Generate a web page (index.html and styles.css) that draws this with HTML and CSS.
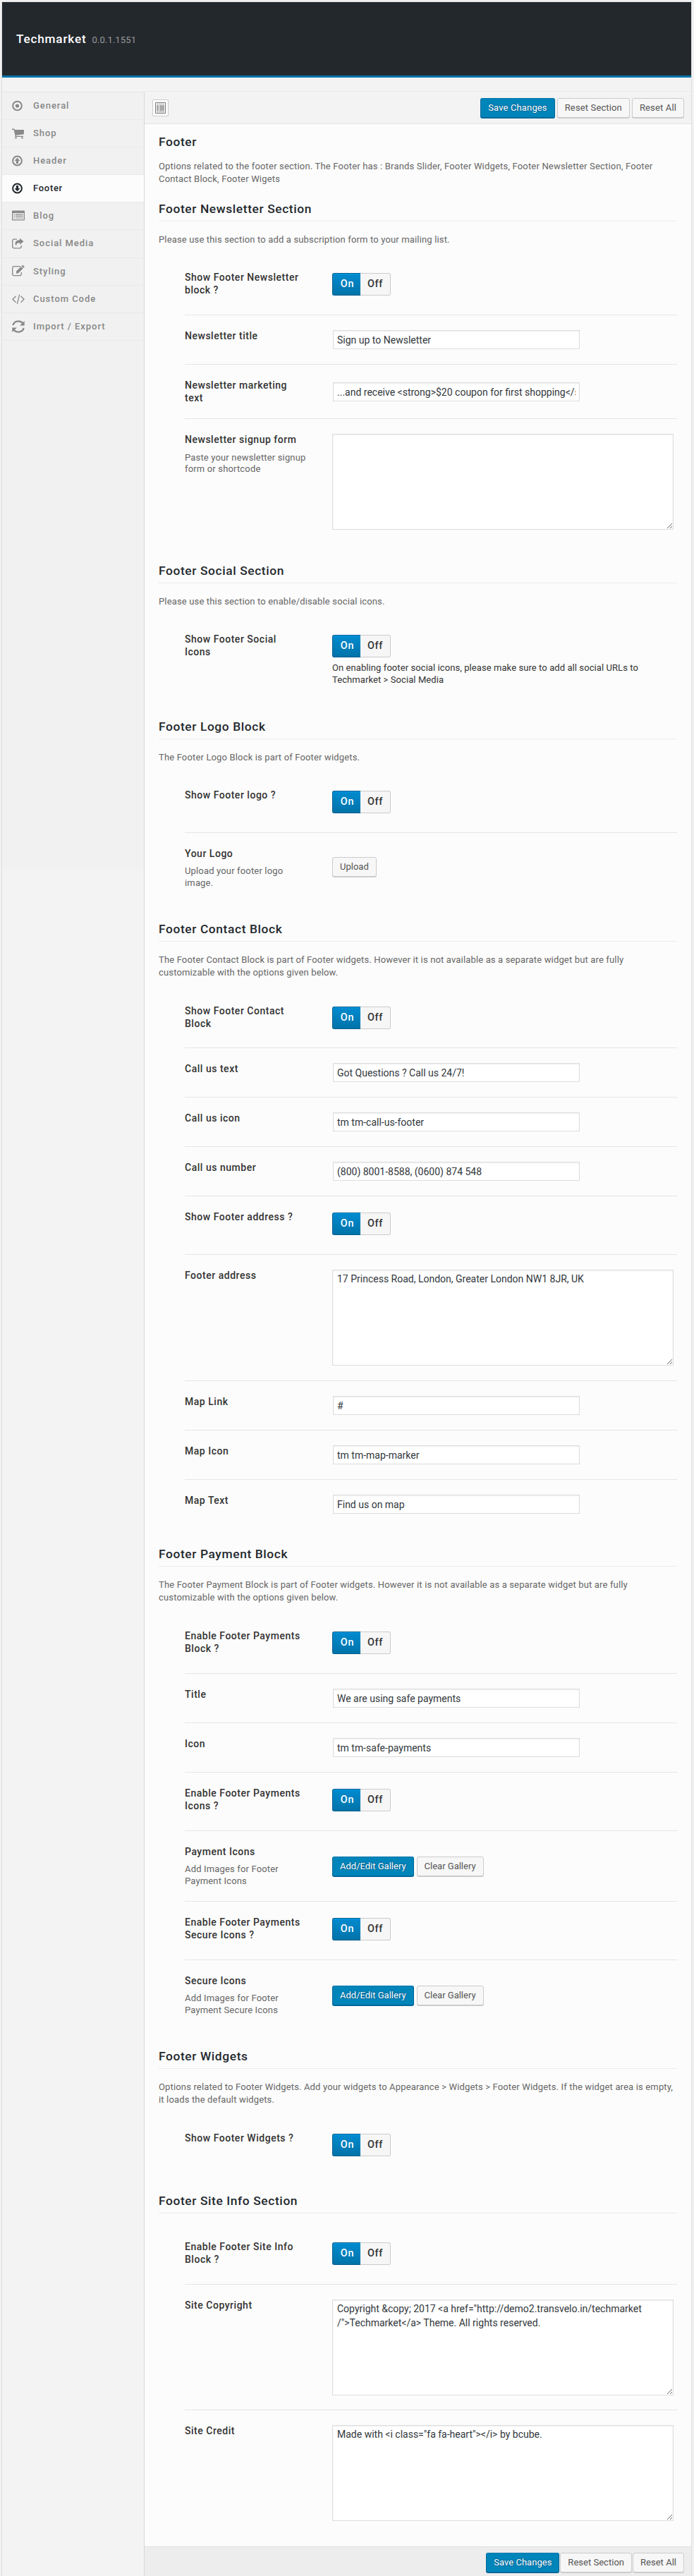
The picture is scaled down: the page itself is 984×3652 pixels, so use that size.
FILE: index.html
```html
<!DOCTYPE html>
<html lang="en">
<head>
<meta charset="utf-8">
<title>Techmarket options</title>
<link rel="stylesheet" href="styles.css">
</head>
<body>
<div class="panel">
  <header class="masthead"><h1>Techmarket</h1><span class="version">0.0.1.1551</span></header>
  <div class="strip"></div>
  <div class="layout">
    <nav class="sidebar">
      <a class="nav-item"><svg class="ico" viewBox="0 0 18 18"><circle cx="7.5" cy="9" r="6.3" fill="none" stroke="currentColor" stroke-width="2"/><circle cx="7.5" cy="9" r="2.6"/></svg>General</a>
      <a class="nav-item"><svg class="ico" viewBox="0 0 18 18"><path d="M0 2.5h3.4l.5 1.6h13v6.2L5.6 11.7l.4 1h10v1.3H4.4l.1-1.8L2.6 3.9H0zM4.3 14.4h2.4v2.2H4.3zM13.2 14.4h2.4v2.2h-2.4z"/></svg>Shop</a>
      <a class="nav-item"><svg class="ico" viewBox="0 0 18 18"><circle cx="7.5" cy="9" r="6.4" fill="none" stroke="currentColor" stroke-width="2"/><path d="M7.5 4.8l4 4.2H9v4H6V9H3.500z"/></svg>Header</a>
      <a class="nav-item active"><svg class="ico" viewBox="0 0 18 18"><circle cx="7.500" cy="9" r="6.4" fill="none" stroke="currentColor" stroke-width="2"/><path d="M7.5 13.200l-4-4.200H6V5h3v4h2.500z"/></svg>Footer</a>
      <a class="nav-item"><svg class="ico" viewBox="0 0 18 18"><path fill-rule="evenodd" d="M1 1.500h16q1 0 1 1v12q0 1-1 1H1q-1 0-1-1v-12q0-1 1-1zM1.300 5v9.200h15.400V5zM2.600 6.200h1.500v1.200H2.600zM5 6.200h10.500v1.200H5zM2.600 8.800h1.500V10H2.600zM5 8.800h10.500V10H5zM2.600 11.400h1.500v1.200H2.600zM5 11.400h10.500v1.200H5z"/></svg>Blog</a>
      <a class="nav-item"><svg class="ico" viewBox="0 0 18 18"><path d="M7 2.200H3.200Q.7 2.200.7 4.700v7.600q0 2.500 2.500 2.500h7.600q2.500 0 2.500-2.500V11" fill="none" stroke="currentColor" stroke-width="1.300"/><path d="M11 .8l5.500 4.400L11 9.700V7.200C7.800 7 6 8 6.200 11.800 2.500 7.500 5.500 3.300 11 3.300z"/></svg>Social Media</a>
      <a class="nav-item"><svg class="ico" viewBox="0 0 18 18"><path d="M12 1.700H3.200Q.7 1.700.7 4.200v8q0 2.500 2.500 2.500h7.600q2.500 0 2.500-2.500V10" fill="none" stroke="currentColor" stroke-width="1.300"/><path d="M6 8.800l6.800-6.900 2.800 2.700-6.900 6.900H6zM13.500 1.200l1.200-1.100q.5-.4 1 0l1.700 1.700q.4.5 0 1l-1.100 1.200z"/></svg>Styling</a>
      <a class="nav-item"><svg class="ico" viewBox="0 0 18 18"><path d="M5.500 4.800L1 9.300l4.500 4.500M12.500 4.800L17 9.300l-4.500 4.500M10.600 2.700L7.400 15.800" fill="none" stroke="currentColor" stroke-width="1.300"/></svg>Custom Code</a>
      <a class="nav-item"><svg class="ico" viewBox="0 0 18 18"><path d="M1.400 7C2.800 1 11-.7 15.300 4.200M16.600 11C15.200 17 7 18.700 2.700 13.800" fill="none" stroke="currentColor" stroke-width="2.300"/><path d="M17.700.9v6.600h-6.600zM.3 17.100v-6.600h6.600z"/></svg>Import / Export</a>
    </nav>
    <main class="main">
      <div class="toolbar">
        <span class="expand"><svg viewBox="0 0 15 16"><path fill="none" stroke="#777" d="M.5.5h14v15H.5z"/><path fill="#aaa" d="M2 2h11v1H2zM2 4h3v8.500H2zM6 4h7v8.500H6zM2 13.300h11v1H2z"/></svg></span>
        <div class="actions"><a class="btn primary">Save Changes</a><a class="btn">Reset Section</a><a class="btn">Reset All</a></div>
      </div>
      <div class="content">
        <div class="intro">
          <h2>Footer</h2>
          <p>Options related to the footer section. The Footer has : Brands Slider, Footer Widgets, Footer Newsletter Section, Footer Contact Block, Footer Wigets</p>
        </div>

        <section>
          <h3>Footer Newsletter Section</h3>
          <p class="desc">Please use this section to add a subscription form to your mailing list.</p>
          <div class="row"><div class="label">Show Footer Newsletter block ?</div><div class="toggle"><b class="on">On</b><b class="off">Off</b></div></div>
          <div class="row text"><div class="label">Newsletter title</div><input class="input" value="Sign up to Newsletter"></div>
          <div class="row text-tall"><div class="label">Newsletter marketing text</div><input class="input" value="...and receive &lt;strong&gt;$20 coupon for first shopping&lt;/strong&gt;"></div>
          <div class="row area last"><div class="label">Newsletter signup form<small class="tight">Paste your newsletter signup form or shortcode</small></div><textarea class="textarea"></textarea></div>
        </section>

        <section>
          <h3>Footer Social Section</h3>
          <p class="desc">Please use this section to enable/disable social icons.</p>
          <div class="row last noted"><div class="label">Show Footer Social<br>Icons</div><div><div class="toggle"><b class="on">On</b><b class="off">Off</b></div><p class="note">On enabling footer social icons, please make sure to add all social URLs to Techmarket &gt; Social Media</p></div></div>
        </section>

        <section>
          <h3>Footer Logo Block</h3>
          <p class="desc">The Footer Logo Block is part of Footer widgets.</p>
          <div class="row"><div class="label">Show Footer logo ?</div><div class="toggle"><b class="on">On</b><b class="off">Off</b></div></div>
          <div class="row upload last"><div class="label">Your Logo<small>Upload your footer logo image.</small></div><div class="buttons"><a class="btn">Upload</a></div></div>
        </section>

        <section>
          <h3>Footer Contact Block</h3>
          <p class="desc two">The Footer Contact Block is part of Footer widgets. However it is not available as a separate widget but are fully customizable with the options given below.</p>
          <div class="row short"><div class="label">Show Footer Contact Block</div><div class="toggle"><b class="on">On</b><b class="off">Off</b></div></div>
          <div class="row text"><div class="label">Call us text</div><input class="input" value="Got Questions ? Call us 24/7!"></div>
          <div class="row text"><div class="label">Call us icon</div><input class="input" value="tm tm-call-us-footer"></div>
          <div class="row text"><div class="label">Call us number</div><input class="input" value="(800) 8001-8588, (0600) 874 548"></div>
          <div class="row"><div class="label">Show Footer address ?</div><div class="toggle"><b class="on">On</b><b class="off">Off</b></div></div>
          <div class="row area"><div class="label">Footer address</div><textarea class="textarea">17 Princess Road, London, Greater London NW1 8JR, UK</textarea></div>
          <div class="row text"><div class="label">Map Link</div><input class="input" value="#"></div>
          <div class="row text"><div class="label">Map Icon</div><input class="input" value="tm tm-map-marker"></div>
          <div class="row text last"><div class="label">Map Text</div><input class="input" value="Find us on map"></div>
        </section>

        <section>
          <h3>Footer Payment Block</h3>
          <p class="desc two">The Footer Payment Block is part of Footer widgets. However it is not available as a separate widget but are fully customizable with the options given below.</p>
          <div class="row"><div class="label">Enable Footer Payments Block ?</div><div class="toggle"><b class="on">On</b><b class="off">Off</b></div></div>
          <div class="row text"><div class="label">Title</div><input class="input" value="We are using safe payments"></div>
          <div class="row text"><div class="label">Icon</div><input class="input" value="tm tm-safe-payments"></div>
          <div class="row"><div class="label">Enable Footer Payments Icons ?</div><div class="toggle"><b class="on">On</b><b class="off">Off</b></div></div>
          <div class="row gallery"><div class="label">Payment Icons<small>Add Images for Footer Payment Icons</small></div><div class="buttons"><a class="btn primary">Add/Edit Gallery</a><a class="btn">Clear Gallery</a></div></div>
          <div class="row"><div class="label">Enable Footer Payments Secure Icons ?</div><div class="toggle"><b class="on">On</b><b class="off">Off</b></div></div>
          <div class="row gallery last"><div class="label">Secure Icons<small>Add Images for Footer Payment Secure Icons</small></div><div class="buttons"><a class="btn primary">Add/Edit Gallery</a><a class="btn">Clear Gallery</a></div></div>
        </section>

        <section>
          <h3>Footer Widgets</h3>
          <p class="desc two">Options related to Footer Widgets. Add your widgets to Appearance &gt; Widgets &gt; Footer Widgets. If the widget area is empty, it loads the default widgets.</p>
          <div class="row last"><div class="label">Show Footer Widgets ?</div><div class="toggle"><b class="on">On</b><b class="off">Off</b></div></div>
        </section>

        <section>
          <h3 class="bare">Footer Site Info Section</h3>
          <div class="row"><div class="label">Enable Footer Site Info Block ?</div><div class="toggle"><b class="on">On</b><b class="off">Off</b></div></div>
          <div class="row area copyright"><div class="label">Site Copyright</div><textarea class="textarea">Copyright &amp;copy; 2017 &lt;a href="http://demo2.transvelo.in/techmarket
/"&gt;Techmarket&lt;/a&gt; Theme. All rights reserved.</textarea></div>
          <div class="row area last"><div class="label">Site Credit</div><textarea class="textarea">Made with &lt;i class="fa fa-heart"&gt;&lt;/i&gt; by bcube.</textarea></div>
        </section>
      </div>
      <div class="bottombar">
        <div class="actions"><a class="btn primary">Save Changes</a><a class="btn">Reset Section</a><a class="btn">Reset All</a></div>
      </div>
    </main>
  </div>
</div>
</body>
</html>
```
FILE: styles.css
```css
* { box-sizing: border-box; }
body {
  margin: 0;
  padding: 2px 3px 0 2px;
  background: #f1f1f1;
  color: #333;
  font: 13px/18.2px Roboto, sans-serif;
}
.panel { height: 3650px; overflow: hidden; border: 1px solid #dedede; border-bottom: 0; background: #f3f3f3; }
.masthead {
  height: 107px;
  padding: 0 20px;
  display: flex;
  align-items: baseline;
  gap: 8px;
  background: #23282d;
  border-bottom: 3px solid #0073aa;
}
.masthead h1 { margin: 0; color: #fff; font-size: 17.2px; line-height: 104px; font-weight: 500; letter-spacing: .8px; }
.version { color: #999; letter-spacing: .12px; }
.strip { height: 21px; border-bottom: 1px solid #e3e3e3; }
.layout { display: flex; height: 3522px; }
.sidebar { width: 202px; border-right: 1px solid #d8d8d8; background: linear-gradient(#f1f1f1 1100px, #f3f3f3 1100px); }
.nav-item {
  height: 39.1px;
  display: flex;
  align-items: center;
  gap: 12px;
  padding-left: 14px;
  border-bottom: 1px solid #eaeaea;
  color: #888;
  font-weight: 500;
  letter-spacing: .95px;
}
.nav-item.active { background: #fcfcfc; color: #23282d; letter-spacing: .7px; }
.ico { width: 18px; height: 18px; fill: currentColor; }
.main { flex: 1; background: #fcfcfc; }
.toolbar {
  height: 45px;
  padding: 0 10px 2px 11px;
  display: flex;
  align-items: center;
  justify-content: space-between;
  background: #f3f3f3;
  border-top: 1px solid #fff;
  border-bottom: 1px solid #e3e3e3;
}
.expand { width: 23px; height: 24px; display: grid; place-items: center; border: 1px solid #ccc; border-radius: 2px; background: #fff; }
.expand svg { width: 15px; height: 16px; }
.actions { display: flex; gap: 3px; }
.btn {
  height: 28px;
  padding: 0 10px;
  border: 1px solid #ccc;
  border-radius: 3px;
  background: #f7f7f7;
  box-shadow: 0 1px 0 #ccc;
  color: #555;
  line-height: 26px;
  white-space: nowrap;
  letter-spacing: .14px;
}
.btn.primary {
  border-color: #0073aa #006799 #006799;
  background: #0085ba;
  box-shadow: 0 1px 0 #006799;
  color: #fff;
  text-shadow: 0 -1px 1px #006799, 1px 0 1px #006799, 0 1px 1px #006799;
}
.content { height: 3434px; padding: 0 20px; }
.intro { height: 98px; padding-top: 15px; }
.intro h2, section h3 { margin: 0; color: #23282d; font-size: 17.4px; font-weight: 500; letter-spacing: .6px; line-height: 20px; }
.intro p { margin: 16px 0 0; color: #666; letter-spacing: .18px; }
section h3 { height: 40px; padding-top: 12px; border-bottom: 1px solid #ececec; }
section h3.bare { margin-bottom: 18px; }
.desc { height: 50px; margin: 0; padding: 17px 2px 0 0; color: #666; letter-spacing: .155px; }
.desc.two { height: 69px; }
.row {
  height: 83px;
  margin-left: 37px;
  padding-top: 21px;
  display: grid;
  grid-template-columns: 173px 1fr;
  column-gap: 36px;
  align-items: start;
  border-bottom: 1px solid #e5e5e5;
}
.row.last { border-bottom: 0; height: 96px; }
.row.short { height: 82px; }
.row.text { height: 70px; }
.row.text-tall { height: 77px; }
.row.text-tall .input { margin-top: 4px; }
.row.text.last { height: 83px; }
.row.area { height: 179px; }
.row.area.copyright { height: 178px; }
.row.area.last { height: 193px; }
.row.noted.last { height: 131px; }
.row.upload.last, .row.gallery.last { height: 114px; }
.row.gallery { height: 100px; }
.label { margin-top: -1px; color: #333; font-size: 14px; font-weight: 500; line-height: 18.2px; letter-spacing: .52px; }
.label small { display: block; margin-top: 7px; color: #666; font-size: 13px; font-weight: 400; line-height: 17px; letter-spacing: .16px; }
.label small.tight { margin-top: 9px; line-height: 16px; }
.toggle { display: flex; width: 83px; height: 32px; margin-top: 2px; font-size: 14.4px; line-height: 29px; letter-spacing: .7px; text-align: center; }
.toggle b { font-weight: 500; border: 1px solid #ccc; }
.toggle .on { width: 40px; padding-left: 2px; color: #fff; background: linear-gradient(#008bd0, #0073a9); border-color: #005d8c; border-right: 0; border-radius: 3px 0 0 3px; box-shadow: inset 0 1px 0 #009ae6; }
.toggle .off { width: 43px; border-left: 0; border-radius: 0 3px 3px 0; background: #f6f6f6; }
.note { margin: 6px 0 0; line-height: 17px; color: #333; letter-spacing: .08px; }
.input, .textarea { display: block; margin: 0; border: 1px solid #ddd; border-radius: 0; outline: 0; background: #fff; color: #32373c; box-shadow: inset 0 1px 2px rgba(0,0,0,.07); font: 14px/20px Roboto, sans-serif; }
.input { width: 350px; height: 27px; margin-left: 1px; padding: 3px 5px; }
.textarea { width: 484px; height: 136px; padding: 2px 6px; resize: vertical; }
.buttons { display: flex; gap: 4px; margin-top: 15px; }
.buttons .btn { letter-spacing: 0; }
.upload .buttons { margin-top: 13px; }
.bottombar { height: 43px; padding: 8px 10px 0; display: flex; justify-content: flex-end; background: #ededed; border-top: 1px solid #e0e0e0; }
.bottombar .actions { gap: 1px; }
.bottombar .btn { letter-spacing: .02px; }
```
